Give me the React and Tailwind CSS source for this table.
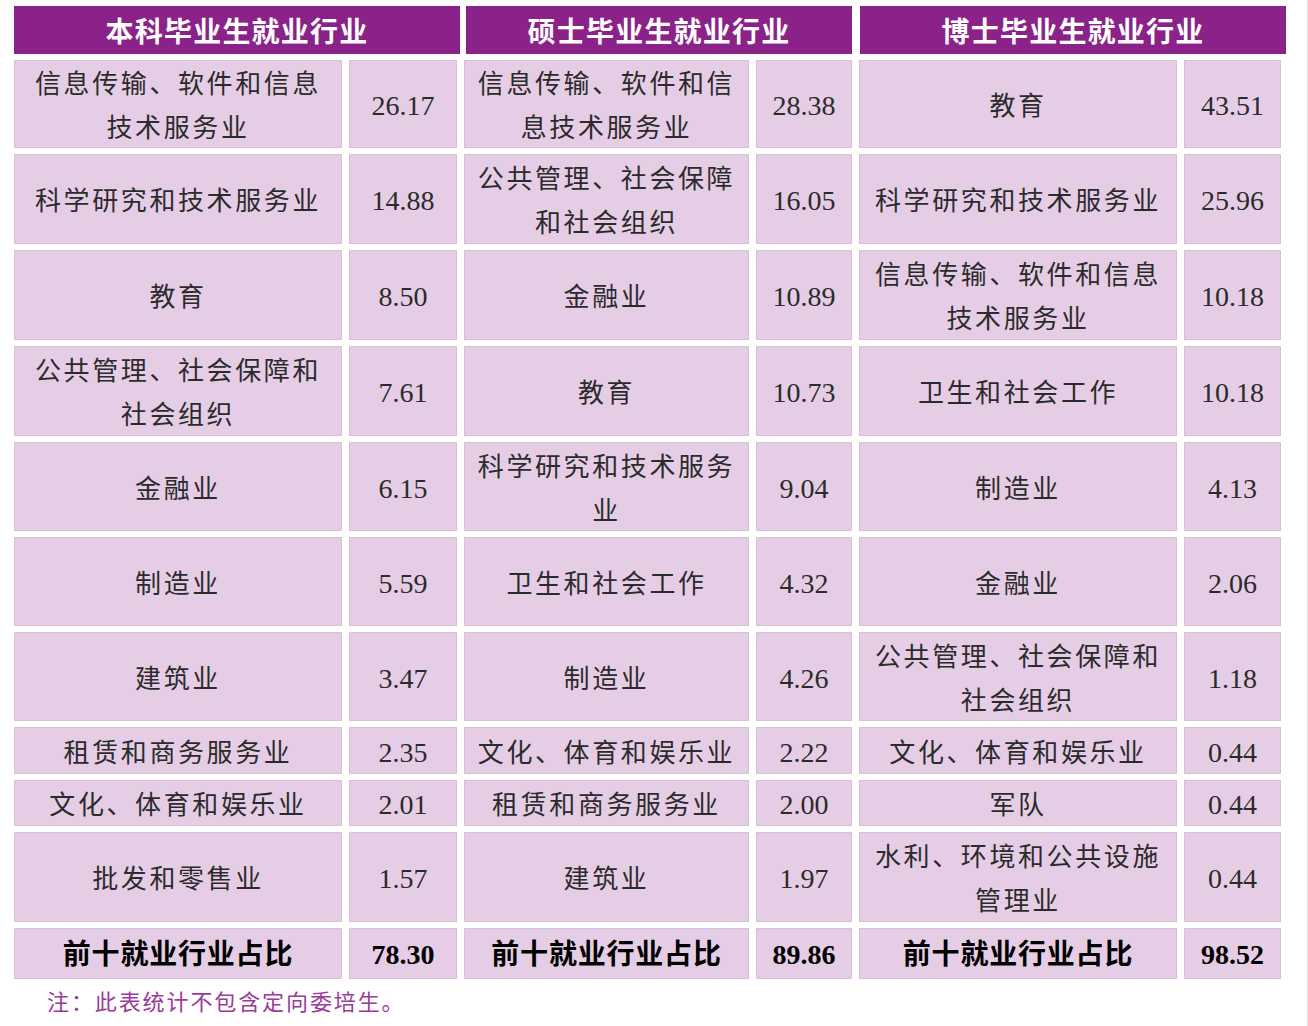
import React from 'react';

const FONT = { fontFamily: '"Liberation Serif", "Noto Sans CJK SC", serif' };
const HEAD_FONT = { fontFamily: '"Noto Sans CJK SC", sans-serif' };

// 每行：[本科, 数值, 硕士, 数值, 博士, 数值]；名称用数组表示换行
const rows = [
  [['信息传输、软件和信息', '技术服务业'], '26.17', ['信息传输、软件和信', '息技术服务业'], '28.38', ['教育'], '43.51'],
  [['科学研究和技术服务业'], '14.88', ['公共管理、社会保障', '和社会组织'], '16.05', ['科学研究和技术服务业'], '25.96'],
  [['教育'], '8.50', ['金融业'], '10.89', ['信息传输、软件和信息', '技术服务业'], '10.18'],
  [['公共管理、社会保障和', '社会组织'], '7.61', ['教育'], '10.73', ['卫生和社会工作'], '10.18'],
  [['金融业'], '6.15', ['科学研究和技术服务', '业'], '9.04', ['制造业'], '4.13'],
  [['制造业'], '5.59', ['卫生和社会工作'], '4.32', ['金融业'], '2.06'],
  [['建筑业'], '3.47', ['制造业'], '4.26', ['公共管理、社会保障和', '社会组织'], '1.18'],
  [['租赁和商务服务业'], '2.35', ['文化、体育和娱乐业'], '2.22', ['文化、体育和娱乐业'], '0.44'],
  [['文化、体育和娱乐业'], '2.01', ['租赁和商务服务业'], '2.00', ['军队'], '0.44'],
  [['批发和零售业'], '1.57', ['建筑业'], '1.97', ['水利、环境和公共设施', '管理业'], '0.44'],
];

const totals = ['78.30', '89.86', '98.52'];

const cell = 'flex items-center justify-center text-center bg-[#e6cde6] border border-[#d9bfd9] text-[#2b2b2b]';

function NameCell({ lines }) {
  return (
    <div className={`${cell} flex-col pt-[6px] text-[26px] leading-[44px] tracking-[2.6px]`}>
      {lines.map((l, i) => (
        <span key={i} className="whitespace-nowrap">{l}</span>
      ))}
    </div>
  );
}

function ValueCell({ v }) {
  return <div className={`${cell} pt-[4px] text-[28px]`}>{v}</div>;
}

export default function App() {
  return (
    <div className="w-[1308px] h-[1026px] bg-white border-r border-[#e2e2e2] overflow-hidden" style={FONT}>
      <div className="pl-[14px] pt-[6px] grid grid-cols-[328px_108px_285px_96px_318px_97px] grid-rows-[48px_88px_90px_90px_90px_89px_89px_89px_47px_46px_90px_51px] gap-x-[7px] gap-y-[6px]">
        <div className="col-span-2 -mr-[3px] flex items-center justify-center bg-[#8b2289] text-white text-[28px] font-bold tracking-[1.2px]" style={HEAD_FONT}>
          本科毕业生就业行业
        </div>
        <div className="col-span-2 ml-[2px] flex items-center justify-center bg-[#8b2289] text-white text-[28px] font-bold tracking-[1.2px]" style={HEAD_FONT}>
          硕士毕业生就业行业
        </div>
        <div className="col-span-2 ml-[1px] -mr-[5px] flex items-center justify-center bg-[#8b2289] text-white text-[28px] font-bold tracking-[1.2px]" style={HEAD_FONT}>
          博士毕业生就业行业
        </div>

        {rows.map((r, i) => (
          <React.Fragment key={i}>
            <NameCell lines={r[0]} />
            <ValueCell v={r[1]} />
            <NameCell lines={r[2]} />
            <ValueCell v={r[3]} />
            <NameCell lines={r[4]} />
            <ValueCell v={r[5]} />
          </React.Fragment>
        ))}

        {totals.map((t) => (
          <React.Fragment key={t}>
            <div className={`${cell} pt-[2px] text-[28px] font-bold text-black tracking-[0.8px]`}>前十就业行业占比</div>
            <div className={`${cell} pt-[2px] text-[28px] font-bold text-black`}>{t}</div>
          </React.Fragment>
        ))}
      </div>

      <p className="pl-[47px] pt-[10px] text-[22px] leading-[28px] tracking-[1.9px] text-[#9b3a98]">
        注：此表统计不包含定向委培生。
      </p>
    </div>
  );
}
